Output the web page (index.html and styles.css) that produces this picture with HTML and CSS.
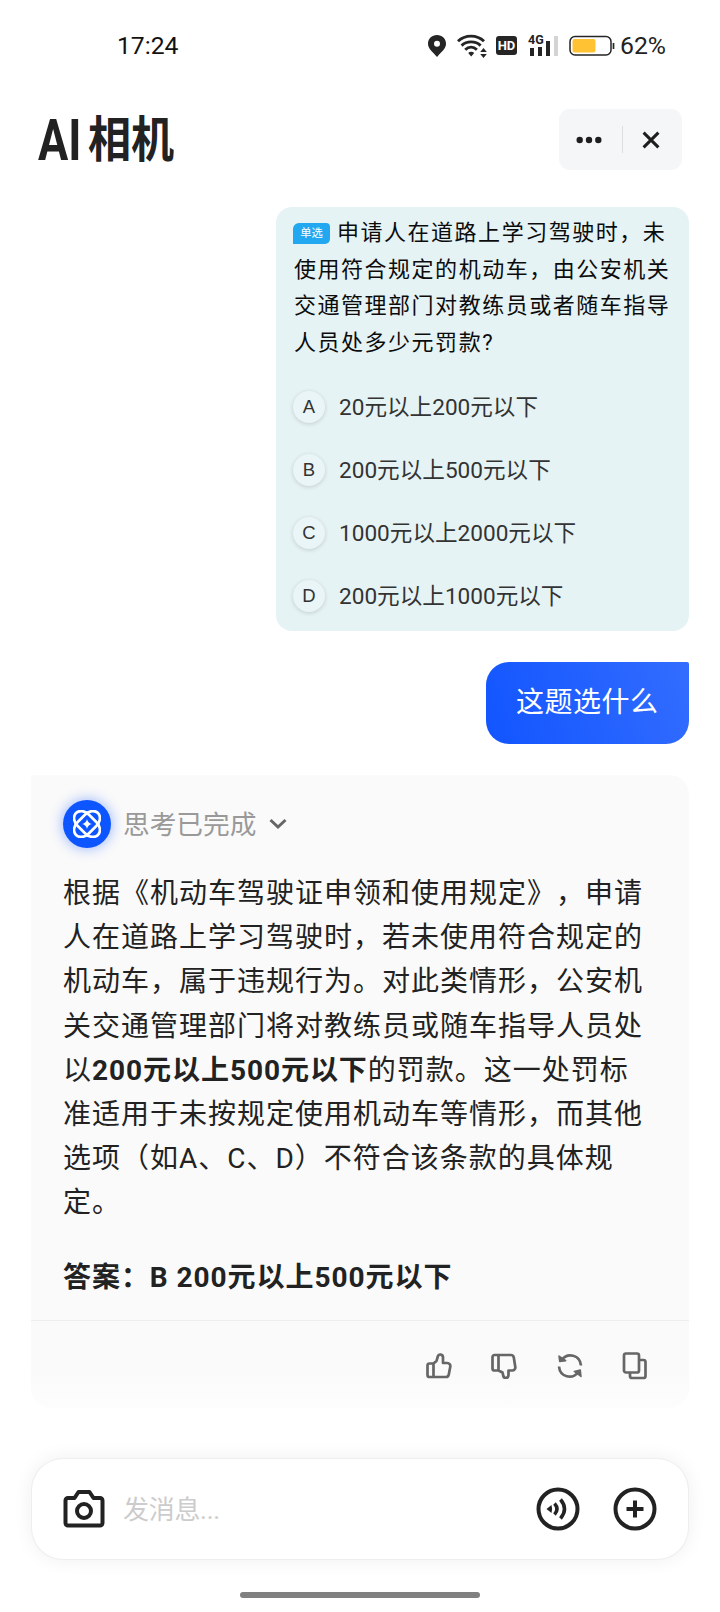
FILE: index.html
```html
<!DOCTYPE html>
<html lang="zh-CN">
<head>
  <meta charset="UTF-8" />
  <meta name="viewport" content="width=device-width, initial-scale=1.0" />
  <title>AI相机</title>
  <link rel="stylesheet" href="styles.css">
</head>
<body>

  <!-- 状态栏 -->
  <div class="status">
    <span class="time">17:24</span>
    <div class="status-icons">
      <svg class="pin" width="20" height="24" viewBox="0 0 20 24"><path fill="#252525" fill-rule="evenodd" d="M10 1C4.800 1 1 4.800 1 9.700 1 15 6 18 10 23c4-5 9-8 9-13.300C19 4.800 15.200 1 10 1zm0 5.800a3 3 0 1 1 0 6 3 3 0 0 1 0-6z"/></svg>
      <svg class="wifi" width="30" height="24" viewBox="0 0 30 24">
        <g fill="none" stroke="#252525" stroke-width="2.900"><path d="M1 7.200C8 .4 20 .4 27 7.200"/><path d="M4.600 11.600c5-5 14-5 19 0"/><path d="M8.200 15.700c3.500-3.200 8.200-3.200 11.700 0"/></g>
        <path fill="#252525" d="M11.200 19c1.700-1.700 4.300-1.700 6 0l-3 3.500zM26.500 14l3.300 4h-6.600zM26.500 24l-3.300-4h6.600z"/>
      </svg>
      <span class="hd">HD</span>
      <div class="signal">
        <span class="net">4G</span>
        <i class="b1"></i><i class="b2"></i><i class="b3"></i><i class="b4"></i>
      </div>
      <svg class="battery" width="46" height="22" viewBox="0 0 46 22"><rect x="1" y="1.500" width="41" height="18.500" rx="5" fill="none" stroke="#252525" stroke-width="1.500"/><rect x="3.500" y="4" width="23" height="13.500" rx="2" fill="#ffc233"/><path d="M44.500 8v6" stroke="#252525" stroke-width="1.700"/></svg>
      <span class="percent">62%</span>
    </div>
  </div>

  <!-- 标题 -->
  <header>
    <h1 class="logo"><span class="latin">AI</span><span class="han">相机</span></h1>
    <div class="capsule">
      <svg width="26" height="8" viewBox="0 0 26 8" fill="#1e1e1e"><circle cx="3.700" cy="4" r="3.200"/><circle cx="13" cy="4" r="3.200"/><circle cx="22.300" cy="4" r="3.200"/></svg>
      <span class="sep"></span>
      <svg width="18" height="18" viewBox="0 0 18 18"><path d="M1.600 1.600l14.800 14.800M16.400 1.600L1.600 16.400" stroke="#1e1e1e" stroke-width="3"/></svg>
    </div>
  </header>

  <main>
    <!-- 题目 -->
    <div class="question">
      <div class="title">
        <div><span class="badge">单选</span>申请人在道路上学习驾驶时，未</div>
        <div>使用符合规定的机动车，由公安机关</div>
        <div>交通管理部门对教练员或者随车指导</div>
        <div>人员处多少元罚款?</div>
      </div>
      <div class="option"><span class="key">A</span><span class="label">20元以上200元以下</span></div>
      <div class="option"><span class="key">B</span><span class="label">200元以上500元以下</span></div>
      <div class="option"><span class="key">C</span><span class="label">1000元以上2000元以下</span></div>
      <div class="option"><span class="key">D</span><span class="label">200元以上1000元以下</span></div>
    </div>

    <div class="bubble">这题选什么</div>

    <!-- 回答 -->
    <div class="answer">
      <div class="thinking">
        <span class="avatar">
          <svg width="28" height="28" viewBox="-14 -14 28 28">
            <g fill="none" stroke="#fff" stroke-width="2.700">
              <rect x="-15.500" y="-8" width="31" height="16" rx="10" ry="8" transform="rotate(45)"/>
              <rect x="-15.500" y="-8" width="31" height="16" rx="10" ry="8" transform="rotate(-45)"/>
            </g>
            <path fill="#fff" d="M0-5Q.8-.8 5 0 .8.800 0 5-.8.800-5 0-.8-.8 0-5z"/>
          </svg>
        </span>
        <span class="state">思考已完成</span>
        <svg width="18" height="12" viewBox="0 0 18 12"><path d="M1.500 2L9 9l7.500-7" fill="none" stroke="#666" stroke-width="3"/></svg>
      </div>
      <div class="text">
        <div>根据《机动车驾驶证申领和使用规定》，申请</div>
        <div>人在道路上学习驾驶时，若未使用符合规定的</div>
        <div>机动车，属于违规行为。对此类情形，公安机</div>
        <div>关交通管理部门将对教练员或随车指导人员处</div>
        <div>以<b>200元以上500元以下</b>的罚款。这一处罚标</div>
        <div>准适用于未按规定使用机动车等情形，而其他</div>
        <div>选项（如A、C、D）不符合该条款的具体规</div>
        <div>定。</div>
      </div>
      <div class="text result"><b>答案：B 200元以上500元以下</b></div>
      <div class="actions">
        <svg width="26" height="26" viewBox="0 0 26 26"><path d="M7.500 10.500h-4a2 2 0 0 0-2 2v9.500a2 2 0 0 0 2 2h16.300a3 3 0 0 0 3-2.500l1.500-8a3 3 0 0 0-3-3.500H17V4.500c0-3.500-4.300-4-5.200-1L10.500 8 7.500 10.500zV24"/></svg>
        <svg width="26" height="26" viewBox="0 0 26 26"><path d="M7.500 17.500h-4a2 2 0 0 1-2-2V4a2 2 0 0 1 2-2h16.300a3 3 0 0 1 3 2.500l1.500 9.500a3 3 0 0 1-3 3.500H17.500v4.500c0 3.500-4.300 4-5.200 1L11.500 19.500 7.500 17.500zV2"/></svg>
        <svg width="26" height="26" viewBox="0 0 26 26"><path d="M5 6.500C10.500-.5 23 1.500 24 12.500M2 13.500c1 11 13.500 13 19 6"/><path fill="#666" stroke-width="1.500" d="M2 3l.7 5.500 6-.8zM24 23.500l-.7-6.500-6 1.500z"/></svg>
        <svg width="26" height="28" viewBox="0 0 26 28"><rect x="2" y="1.500" width="15" height="19" rx="2"/><path d="M17 8h4.500a2 2 0 0 1 2 2v14a2 2 0 0 1-2 2H10a2 2 0 0 1-2-2v-3.500"/></svg>
      </div>
    </div>
  </main>

  <!-- 输入框 -->
  <div class="composer">
    <svg width="42" height="38" viewBox="0 0 42 38" fill="none" stroke="#222" stroke-width="4"><path stroke-linejoin="round" d="M5 8h6.500L15.500 2h11l4 6H37a2.500 2.500 0 0 1 2.500 2.500V33a2.500 2.500 0 0 1-2.500 2.500H5A2.500 2.500 0 0 1 2.500 33V10.500A2.500 2.500 0 0 1 5 8z"/><circle cx="21" cy="21" r="7"/></svg>
    <span class="placeholder">发消息...</span>
    <svg class="voice" width="44" height="44" viewBox="0 0 44 44" fill="none" stroke="#222" stroke-width="4"><circle cx="22" cy="22" r="19.500"/><path stroke="none" fill="#222" d="M10.500 22l5-4q1.200 4 0 8z"/><path stroke-width="3.500" d="M18.500 16.500q5 5.500 0 11M24.500 12.500q8 9.500 0 19"/></svg>
    <svg width="44" height="44" viewBox="0 0 44 44" fill="none" stroke="#222" stroke-width="4"><circle cx="22" cy="22" r="19.500"/><path d="M13.500 22h17M22 13.500v17"/></svg>
  </div>
  <div class="home-bar"></div>

</body>
</html>
```
FILE: styles.css
```css
* {
  box-sizing: border-box;
}

body {
  margin: 0;
  width: 720px;
  height: 1612px;
  overflow: hidden;
  background: #fff;
  color: #222;
  font-family: Roboto, "Noto Sans CJK SC", sans-serif;
  text-spacing-trim: space-all;
}

svg {
  display: block;
  flex: none;
}

/* 状态栏 */
.status {
  height: 91px;
  padding: 0 52px 0 117px;
  display: flex;
  align-items: center;
  justify-content: space-between;
}

.time {
  font-size: 24.7px;
  color: #111;
}

.status-icons {
  display: flex;
  align-items: center;
}

.wifi {
  margin-left: 10px;
}

.hd {
  width: 21px;
  height: 19px;
  margin-left: 9px;
  border-radius: 3px;
  background: #252525;
  color: #fff;
  font-size: 13px;
  font-weight: bold;
  line-height: 19px;
  text-align: center;
}

.signal {
  position: relative;
  width: 31px;
  height: 21px;
  margin-left: 11px;
  padding-left: 2px;
  display: flex;
  align-items: flex-end;
  gap: 4px;
}

.net {
  position: absolute;
  left: 0;
  top: -2px;
  font-size: 12.5px;
  font-weight: bold;
  line-height: 13px;
}

.signal i {
  width: 4px;
  background: #252525;
}

.signal .b1 { height: 8px; }
.signal .b2 { height: 9px; }
.signal .b3 { height: 15px; }
.signal .b4 { height: 20px; background: #d4d4d4; }

.battery {
  margin-left: 10px;
}

.percent {
  width: 48px;
  margin-left: 5px;
  font-size: 24.8px;
}

/* 标题 */
header {
  height: 116px;
  padding: 18px 38px 0 38px;
  display: flex;
  justify-content: space-between;
}

.logo {
  margin: 0;
  padding-top: 2px;
  display: flex;
  line-height: 60px;
  white-space: nowrap;
}

.latin {
  width: 50px;
  font-size: 57px;
  font-weight: bold;
  transform: scaleX(.79);
  transform-origin: left;
}

.han {
  font-size: 49px;
  font-weight: bold;
  transform: scaleX(.88);
  transform-origin: left;
}

.capsule {
  width: 123px;
  height: 61px;
  padding: 0 22px 0 17px;
  border-radius: 11px;
  background: #f5f6f8;
  display: flex;
  align-items: center;
  justify-content: space-between;
}

.sep {
  width: 1px;
  height: 27px;
  background: #dcdddf;
}

main {
  padding: 0 31px;
  display: flex;
  flex-direction: column;
}

/* 题目 */
.question {
  align-self: flex-end;
  width: 413px;
  height: 424px;
  padding: 8px 18px 0 17px;
  border-radius: 16px;
  background: #e6f3f5;
}

.title {
  height: 160px;
  padding-left: 1px;
  font-size: 22px;
  letter-spacing: 1.52px;
  line-height: 36.7px;
  color: #0c0c0c;
  white-space: nowrap;
}

.badge {
  display: inline-block;
  width: 37px;
  height: 21px;
  margin: 0 7px 0 -1px;
  border-radius: 6px 4px 5px 0;
  background: #21a8f0;
  color: #fff;
  font-size: 11.3px;
  letter-spacing: 0;
  line-height: 21px;
  text-align: center;
  vertical-align: 3px;
}

.option {
  height: 63px;
  display: flex;
  align-items: center;
  gap: 14px;
  font-size: 22.6px;
  color: #333;
}

.label {
  padding-bottom: 3px;
}

.key {
  width: 32px;
  height: 32px;
  border-radius: 50%;
  background: #e9f5f6;
  box-shadow: 0 1px 4px rgba(0, 0, 0, .16);
  font-family: "Liberation Sans", sans-serif;
  font-size: 18.5px;
  line-height: 32px;
  text-align: center;
}

.bubble {
  align-self: flex-end;
  width: 203px;
  height: 82px;
  margin-top: 31px;
  padding-left: 30px;
  border-radius: 23px 2px 23px 23px;
  background: linear-gradient(70deg, #1255ff, #336dff);
  color: #fff;
  font-size: 28px;
  letter-spacing: .5px;
  line-height: 82px;
}

/* 回答 */
.answer {
  height: 633px;
  margin-top: 31px;
  border-radius: 4px 20px 20px 20px;
  background: linear-gradient(#fafafa 94%, #fdfdfd);
}

.thinking {
  height: 97px;
  padding: 0 0 0 32px;
  display: flex;
  align-items: center;
}

.avatar {
  width: 48px;
  height: 48px;
  border-radius: 50%;
  background: #0d55ff;
  box-shadow: 0 0 14px rgba(13, 85, 255, .45);
  display: flex;
  align-items: center;
  justify-content: center;
}

.state {
  margin: 0 13px 0 12px;
  padding-bottom: 3px;
  font-size: 26.7px;
  color: #999;
}

.text {
  padding-left: 32px;
  font-size: 28px;
  letter-spacing: 1px;
  line-height: 44.2px;
  white-space: nowrap;
}

.text b {
  letter-spacing: .95px;
}

.result {
  height: 94px;
  padding-top: 30px;
}

.actions {
  height: 92px;
  padding-right: 41px;
  border-top: 1px solid #eee;
  display: flex;
  align-items: center;
  justify-content: flex-end;
  gap: 39.5px;
}

.actions svg {
  fill: none;
  stroke: #666;
  stroke-width: 2.7;
  stroke-linejoin: round;
}

/* 输入框 */
.composer {
  height: 100px;
  margin: 51px 32px 0;
  padding: 0 31px 1px;
  border-radius: 31px;
  box-shadow: 0 0 0 1px #eee, 0 0 20px rgba(0, 0, 0, .07);
  display: flex;
  align-items: center;
}

.placeholder {
  margin-left: 18px;
  padding-bottom: 3px;
  font-size: 26px;
  letter-spacing: -.3px;
  color: #ccc;
}

.voice {
  margin: 0 33px 0 auto;
}

.home-bar {
  width: 240px;
  height: 6px;
  margin: 33px auto 0;
  border-radius: 3px;
  background: #808080;
}
```
